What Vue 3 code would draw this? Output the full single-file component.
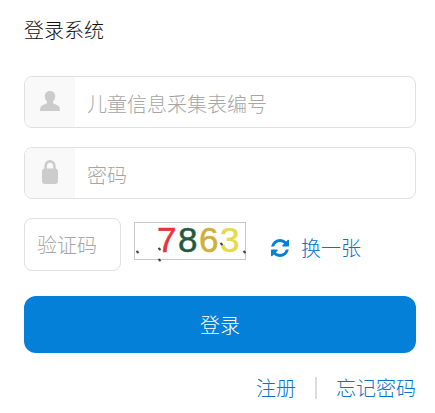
<script setup>
const digits = [
  { ch: '7', color: '#e8333a' },
  { ch: '8', color: '#1f5a3c' },
  { ch: '6', color: '#cfae3a' },
  { ch: '3', color: '#e6da4a' },
]
const specks = [
  { x: 1, y: 28 }, { x: 23, y: 25 }, { x: 23, y: 36 }, { x: 85, y: 20 }, { x: 108, y: 28 },
]
</script>

<template>
  <main class="page">
    <h1 class="title">登录系统</h1>
    <div class="field">
      <span class="addon">
        <svg width="20" height="20" viewBox="0 0 20 20">
          <path fill="#ccc" d="M10 0c3.400 0 5.200 2.300 5.200 5.300 0 2.200-.9 4-2.200 5.200v1.200c0 1 2.900 1.600 5 2.800 1.400.8 2 2.400 2 5.500H0c0-3.100.6-4.700 2-5.500 2.100-1.200 5-1.800 5-2.800v-1.200C5.700 9.300 4.800 7.500 4.800 5.300 4.800 2.300 6.600 0 10 0z"/>
        </svg>
      </span>
      <span class="ph">儿童信息采集表编号</span>
    </div>
    <div class="field">
      <span class="addon">
        <svg width="16" height="24" viewBox="0 0 16 24">
          <path fill="none" stroke="#ccc" stroke-width="2.600" d="M3.600 11V6.200C3.600 3.400 5.400 1.400 8 1.400s4.400 2 4.400 4.800V11"/>
          <rect x="0" y="8.500" width="16" height="15.500" rx="3" fill="#ccc"/>
        </svg>
      </span>
      <span class="ph">密码</span>
    </div>
    <div class="captcha-row">
      <div class="code"><span class="ph">验证码</span></div>
      <div class="captcha">
        <span v-for="d in digits" :key="d.ch" class="digit" :style="{ color: d.color }">{{ d.ch }}</span>
        <i v-for="(s, n) in specks" :key="n" class="speck" :style="{ left: s.x + 'px', top: s.y + 'px' }"></i>
      </div>
      <a class="swap">
        <svg width="18" height="18" viewBox="0 0 1536 1536">
          <path fill="#0580d8" d="M1511 928q0 5-1 7-64 268-268 434.500t-478 166.500q-146 0-282.500-55t-243.500-157l-129 129q-19 19-45 19t-45-19-19-45v-448q0-26 19-45t45-19h448q26 0 45 19t19 45-19 45l-137 137q71 66 161 102t187 36q134 0 250-65t186-179q11-17 53-117 8-23 30-23h192q13 0 22.500 9.500t9.500 22.500zm25-800v448q0 26-19 45t-45 19h-448q-26 0-45-19t-19-45 19-45l138-138q-148-137-349-137-134 0-250 65t-186 179q-11 17-53 117-8 23-30 23h-199q-13 0-22.500-9.500t-9.500-22.500v-7q65-268 270-434.500t480-166.500q146 0 284 55.500t245 156.500l130-129q19-19 45-19t45 19 19 45z"/>
        </svg>
        <span>换一张</span>
      </a>
    </div>
    <button class="submit" type="button">登录</button>
    <footer class="links">
      <a>注册</a>
      <span class="sep"></span>
      <a>忘记密码</a>
    </footer>
  </main>
</template>

<style scoped>
.page {
  box-sizing: border-box;
  width: 435px;
  height: 413px;
  padding: 18px 19px 0 24px;
  background: #fff;
  overflow: hidden;
  font-family: "Noto Sans CJK SC", "Liberation Sans", sans-serif;
  font-weight: 300;
}
.title {
  margin: 0 0 34px;
  height: 24px;
  line-height: 24px;
  font-size: 20px;
  font-weight: 300;
  color: #111;
}
.field {
  box-sizing: border-box;
  display: flex;
  align-items: center;
  height: 52px;
  margin-bottom: 19px;
  border: 1px solid #e0e0e0;
  border-radius: 8px;
  overflow: hidden;
}
.addon {
  flex: none;
  display: flex;
  align-items: center;
  justify-content: center;
  width: 50px;
  height: 100%;
  background: #f9f9f9;
}
.addon svg { margin-top: -3px; }
.ph {
  position: relative;
  top: 1px;
  font-size: 20px;
  color: #a6a6a6;
}
.field .ph { margin-left: 12px; }
.captcha-row {
  display: flex;
  align-items: center;
  height: 53px;
}
.code {
  box-sizing: border-box;
  display: flex;
  align-items: center;
  width: 97px;
  height: 53px;
  padding-left: 12px;
  border: 1px solid #e0e0e0;
  border-radius: 8px;
}
.code .ph { top: 0; }
.captcha {
  box-sizing: border-box;
  position: relative;
  display: flex;
  align-items: center;
  width: 112px;
  height: 38px;
  margin: -8px 0 0 13px;
  padding-left: 22px;
  border: 1px solid #c8c8c8;
}
.digit {
  position: relative;
  top: -1px;
  font-family: "Liberation Sans", sans-serif;
  font-size: 35px;
  font-weight: 400;
  line-height: 36px;
  width: 21px;
  -webkit-text-stroke: 0.5px currentColor;
}
.speck {
  position: absolute;
  width: 3px;
  height: 2px;
  background: #444;
  transform: rotate(45deg);
}
.swap {
  display: flex;
  align-items: center;
  gap: 12px;
  margin: 6px 0 0 25px;
  font-size: 20px;
  color: #0a74cc;
}
.submit {
  display: block;
  width: 100%;
  height: 57px;
  margin-top: 25px;
  border: 0;
  border-radius: 12px;
  background: #0580d8;
  color: #fff;
  font-family: inherit;
  font-size: 20px;
  font-weight: 300;
}
.links {
  display: flex;
  justify-content: flex-end;
  align-items: center;
  gap: 19px;
  margin-top: 23px;
  font-size: 20px;
  line-height: 24px;
  color: #0a74cc;
}
.sep {
  width: 2px;
  height: 22px;
  background: #ddd;
}
</style>
